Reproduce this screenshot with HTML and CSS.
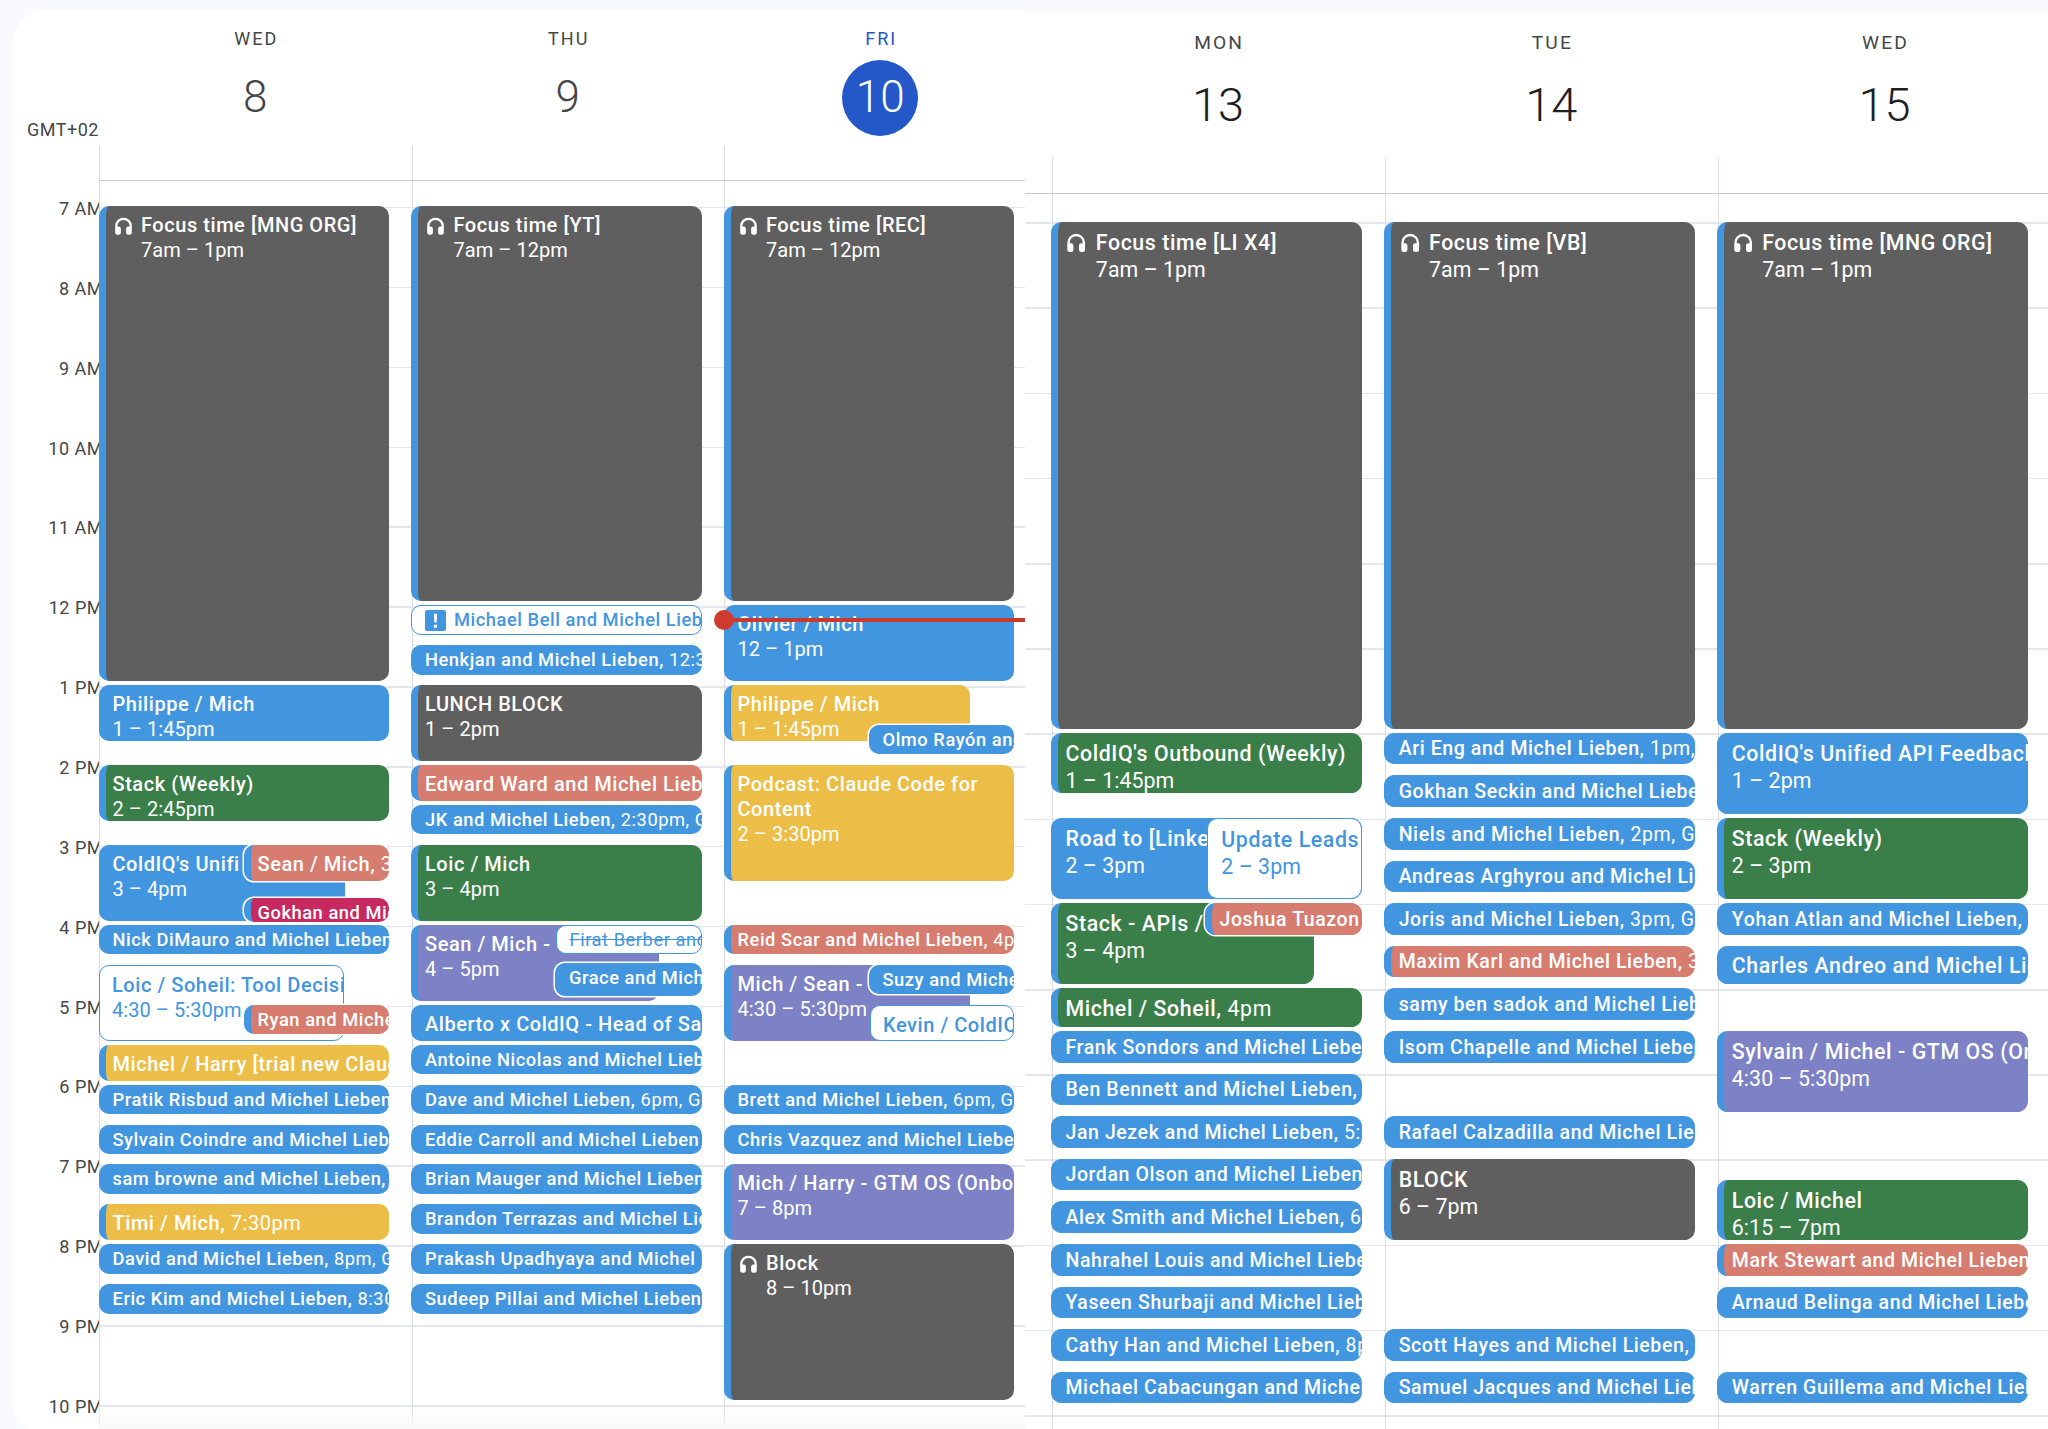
FILE: index.html
```html
<!DOCTYPE html>
<html lang="en">
<head>
  <meta charset="utf-8">
  <title>Calendar – two weeks</title>
  <link rel="stylesheet" href="styles.css">
</head>
<body>
  <svg class="sprite" width="0" height="0">
    <symbol id="headphones" viewBox="0 0 24 24">
      <path d="M12 2.500a9.500 9.500 0 0 0-9.500 9.500v7.500a2.500 2.500 0 0 0 2.500 2.500h1.500A2.500 2.500 0 0 0 9 19.500V15a2.500 2.500 0 0 0-2.500-2.500h-1.500V12a7 7 0 0 1 14 0v.5h-1.500A2.500 2.500 0 0 0 15 15v4.500a2.500 2.500 0 0 0 2.500 2.500H19a2.500 2.500 0 0 0 2.500-2.500V12A9.500 9.500 0 0 0 12 2.500z"/>
    </symbol>
  </svg>

  <main class="screens">

    <!-- Week 1: Wed 8 to Fri 10 -->
    <section class="cal cal-a">
      <div class="head">
        <div class="tz">GMT+02</div>
        <div class="day-head"><div class="dow">WED</div><div class="num">8</div><div class="tail"></div></div>
        <div class="day-head"><div class="dow">THU</div><div class="num">9</div><div class="tail"></div></div>
        <div class="day-head today"><div class="dow">FRI</div><div class="num">10</div><div class="tail"></div></div>
      </div>

      <div class="grid">
        <div class="gutter">
          <div class="hr">7 AM</div>
          <div class="hr">8 AM</div>
          <div class="hr">9 AM</div>
          <div class="hr">10 AM</div>
          <div class="hr">11 AM</div>
          <div class="hr">12 PM</div>
          <div class="hr">1 PM</div>
          <div class="hr">2 PM</div>
          <div class="hr">3 PM</div>
          <div class="hr">4 PM</div>
          <div class="hr">5 PM</div>
          <div class="hr">6 PM</div>
          <div class="hr">7 PM</div>
          <div class="hr">8 PM</div>
          <div class="hr">9 PM</div>
          <div class="hr">10 PM</div>
        </div>

        <!-- Wed 8 -->
        <div class="day">
          <div class="ev gray focus" style="--t:7;--d:6"><svg class="ic"><use href="#headphones"/></svg><div><div class="ttl">Focus time [MNG ORG]</div><div class="tm">7am – 1pm</div></div></div>
          <div class="ev blue" style="--t:13;--d:.75"><div class="ttl">Philippe / Mich</div><div class="tm">1 – 1:45pm</div></div>
          <div class="ev green" style="--t:14;--d:.75"><div class="ttl">Stack (Weekly)</div><div class="tm">2 – 2:45pm</div></div>
          <div class="ev blue" style="--t:15;--d:1;--r:44px"><div class="ttl">ColdIQ's Unifi</div><div class="tm">3 – 4pm</div></div>
          <div class="ev salmon one ring" style="--t:15;--d:.5;--x:145px"><b>Sean / Mich,</b> 3pm</div>
          <div class="ev crimson short ring" style="--t:15.66;--d:.35;--x:145px"><b>Gokhan and Michel</b></div>
          <div class="ev blue short" style="--t:16;--d:.417"><b>Nick DiMauro and Michel Lieben</b></div>
          <div class="ev line" style="--t:16.5;--d:1;--r:45px"><div class="ttl">Loic / Soheil: Tool Decisi</div><div class="tm">4:30 – 5:30pm</div></div>
          <div class="ev salmon short ring" style="--t:17;--d:.417;--x:145px"><b>Ryan and Michel</b></div>
          <div class="ev yellow one" style="--t:17.5;--d:.5"><b>Michel / Harry [trial new Claude</b></div>
          <div class="ev blue short" style="--t:18;--d:.417"><b>Pratik Risbud and Michel Lieben</b></div>
          <div class="ev blue short" style="--t:18.5;--d:.417"><b>Sylvain Coindre and Michel Lieben</b></div>
          <div class="ev blue short" style="--t:19;--d:.417"><b>sam browne and Michel Lieben,</b></div>
          <div class="ev yellow one" style="--t:19.5;--d:.5"><b>Timi / Mich,</b> 7:30pm</div>
          <div class="ev blue short" style="--t:20;--d:.417"><b>David and Michel Lieben,</b> 8pm, Google</div>
          <div class="ev blue short" style="--t:20.5;--d:.417"><b>Eric Kim and Michel Lieben,</b> 8:30pm</div>
        </div>

        <!-- Thu 9 -->
        <div class="day">
          <div class="ev gray focus" style="--t:7;--d:5"><svg class="ic"><use href="#headphones"/></svg><div><div class="ttl">Focus time [YT]</div><div class="tm">7am – 12pm</div></div></div>
          <div class="ev line short needs-rsvp" style="--t:12;--d:.417"><svg class="alert" viewBox="0 0 20 20"><rect width="20" height="20" rx="2"/><path d="M8.500 3.500h3l-.4 8.500H8.900zM8.500 14h3v3h-3z"/></svg><b>Michael Bell and Michel Lieben</b></div>
          <div class="ev blue short" style="--t:12.5;--d:.417"><b>Henkjan and Michel Lieben,</b> 12:30pm</div>
          <div class="ev gray" style="--t:13;--d:1"><div class="ttl">LUNCH BLOCK</div><div class="tm">1 – 2pm</div></div>
          <div class="ev salmon one" style="--t:14;--d:.5"><b>Edward Ward and Michel Lieben</b></div>
          <div class="ev blue short" style="--t:14.5;--d:.417"><b>JK and Michel Lieben,</b> 2:30pm, Google</div>
          <div class="ev green" style="--t:15;--d:1"><div class="ttl">Loic / Mich</div><div class="tm">3 – 4pm</div></div>
          <div class="ev purple" style="--t:16;--d:1;--r:43px"><div class="ttl">Sean / Mich -</div><div class="tm">4 – 5pm</div></div>
          <div class="ev line short struck" style="--t:16;--d:.417;--x:145px"><b>Firat Berber and Michel</b></div>
          <div class="ev blue short ring" style="--t:16.475;--d:.46;--x:144px"><b>Grace and Michel</b></div>
          <div class="ev blue one" style="--t:17;--d:.5"><b>Alberto x ColdIQ - Head of Sales</b></div>
          <div class="ev blue short" style="--t:17.5;--d:.417"><b>Antoine Nicolas and Michel Lieben</b></div>
          <div class="ev blue short" style="--t:18;--d:.417"><b>Dave and Michel Lieben,</b> 6pm, Google</div>
          <div class="ev blue short" style="--t:18.5;--d:.417"><b>Eddie Carroll and Michel Lieben</b></div>
          <div class="ev blue short" style="--t:19;--d:.417"><b>Brian Mauger and Michel Lieben</b></div>
          <div class="ev blue short" style="--t:19.5;--d:.417"><b>Brandon Terrazas and Michel Lieben</b></div>
          <div class="ev blue short" style="--t:20;--d:.417"><b>Prakash Upadhyaya and Michel Lieben</b></div>
          <div class="ev blue short" style="--t:20.5;--d:.417"><b>Sudeep Pillai and Michel Lieben</b></div>
        </div>

        <!-- Fri 10 -->
        <div class="day">
          <div class="ev gray focus" style="--t:7;--d:5"><svg class="ic"><use href="#headphones"/></svg><div><div class="ttl">Focus time [REC]</div><div class="tm">7am – 12pm</div></div></div>
          <div class="ev blue" style="--t:12;--d:1"><div class="ttl">Olivier / Mich</div><div class="tm">12 – 1pm</div></div>
          <div class="ev yellow" style="--t:13;--d:.75;--r:44px"><div class="ttl">Philippe / Mich</div><div class="tm">1 – 1:45pm</div></div>
          <div class="ev blue short ring" style="--t:13.5;--d:.417;--x:145px"><b>Olmo Rayón and Michel</b></div>
          <div class="ev yellow wrap" style="--t:14;--d:1.5"><div class="ttl">Podcast: Claude Code for Content</div><div class="tm">2 – 3:30pm</div></div>
          <div class="ev salmon short" style="--t:16;--d:.417"><b>Reid Scar and Michel Lieben,</b> 4pm</div>
          <div class="ev purple" style="--t:16.5;--d:1;--r:44px"><div class="ttl">Mich / Sean -</div><div class="tm">4:30 – 5:30pm</div></div>
          <div class="ev blue short ring" style="--t:16.5;--d:.417;--x:145px"><b>Suzy and Michel</b></div>
          <div class="ev line one" style="--t:17;--d:.5;--x:146px"><b>Kevin / ColdIQ</b></div>
          <div class="ev blue short" style="--t:18;--d:.417"><b>Brett and Michel Lieben,</b> 6pm, Google</div>
          <div class="ev blue short" style="--t:18.5;--d:.417"><b>Chris Vazquez and Michel Lieben</b></div>
          <div class="ev purple" style="--t:19;--d:1"><div class="ttl">Mich / Harry - GTM OS (Onboarding)</div><div class="tm">7 – 8pm</div></div>
          <div class="ev gray focus" style="--t:20;--d:2"><svg class="ic"><use href="#headphones"/></svg><div><div class="ttl">Block</div><div class="tm">8 – 10pm</div></div></div>
          <div class="now" style="--t:12.17"></div>
        </div>
      </div>
    </section>

    <!-- Week 2: Mon 13 to Wed 15 -->
    <section class="cal cal-b">
      <div class="head">
        <div class="tz"></div>
        <div class="day-head"><div class="dow">MON</div><div class="num">13</div><div class="tail"></div></div>
        <div class="day-head"><div class="dow">TUE</div><div class="num">14</div><div class="tail"></div></div>
        <div class="day-head"><div class="dow">WED</div><div class="num">15</div><div class="tail"></div></div>
      </div>

      <div class="grid">
        <div class="gutter"></div>

        <!-- Mon 13 -->
        <div class="day">
          <div class="ev gray focus" style="--t:7;--d:6"><svg class="ic"><use href="#headphones"/></svg><div><div class="ttl">Focus time [LI X4]</div><div class="tm">7am – 1pm</div></div></div>
          <div class="ev green" style="--t:13;--d:.75"><div class="ttl">ColdIQ's Outbound (Weekly)</div><div class="tm">1 – 1:45pm</div></div>
          <div class="ev blue" style="--t:14;--d:1"><div class="ttl">Road to [Linke</div><div class="tm">2 – 3pm</div></div>
          <div class="ev line" style="--t:14;--d:1;--x:156px"><div class="ttl">Update Leads</div><div class="tm">2 – 3pm</div></div>
          <div class="ev green" style="--t:15;--d:1;--r:48px"><div class="ttl">Stack - APIs /</div><div class="tm">3 – 4pm</div></div>
          <div class="ev salmon short ring" style="--t:15;--d:.417;--x:154px"><b>Joshua Tuazon</b></div>
          <div class="ev green one" style="--t:16;--d:.5"><b>Michel / Soheil,</b> 4pm</div>
          <div class="ev blue short" style="--t:16.5;--d:.417"><b>Frank Sondors and Michel Lieben</b></div>
          <div class="ev blue short" style="--t:17;--d:.417"><b>Ben Bennett and Michel Lieben,</b></div>
          <div class="ev blue short" style="--t:17.5;--d:.417"><b>Jan Jezek and Michel Lieben,</b> 5:30pm</div>
          <div class="ev blue short" style="--t:18;--d:.417"><b>Jordan Olson and Michel Lieben</b></div>
          <div class="ev blue short" style="--t:18.5;--d:.417"><b>Alex Smith and Michel Lieben,</b> 6:30pm</div>
          <div class="ev blue short" style="--t:19;--d:.417"><b>Nahrahel Louis and Michel Lieben</b></div>
          <div class="ev blue short" style="--t:19.5;--d:.417"><b>Yaseen Shurbaji and Michel Lieben</b></div>
          <div class="ev blue short" style="--t:20;--d:.417"><b>Cathy Han and Michel Lieben,</b> 8pm</div>
          <div class="ev blue short" style="--t:20.5;--d:.417"><b>Michael Cabacungan and Michel</b></div>
        </div>

        <!-- Tue 14 -->
        <div class="day">
          <div class="ev gray focus" style="--t:7;--d:6"><svg class="ic"><use href="#headphones"/></svg><div><div class="ttl">Focus time [VB]</div><div class="tm">7am – 1pm</div></div></div>
          <div class="ev blue short" style="--t:13;--d:.417"><b>Ari Eng and Michel Lieben,</b> 1pm, Google</div>
          <div class="ev blue short" style="--t:13.5;--d:.417"><b>Gokhan Seckin and Michel Lieben</b></div>
          <div class="ev blue short" style="--t:14;--d:.417"><b>Niels and Michel Lieben,</b> 2pm, Google</div>
          <div class="ev blue short" style="--t:14.5;--d:.417"><b>Andreas Arghyrou and Michel Lieben</b></div>
          <div class="ev blue short" style="--t:15;--d:.417"><b>Joris and Michel Lieben,</b> 3pm, Google</div>
          <div class="ev salmon short" style="--t:15.5;--d:.417"><b>Maxim Karl and Michel Lieben,</b> 3:30pm</div>
          <div class="ev blue short" style="--t:16;--d:.417"><b>samy ben sadok and Michel Lieben</b></div>
          <div class="ev blue short" style="--t:16.5;--d:.417"><b>Isom Chapelle and Michel Lieben</b></div>
          <div class="ev blue short" style="--t:17.5;--d:.417"><b>Rafael Calzadilla and Michel Lieben</b></div>
          <div class="ev gray" style="--t:18;--d:1"><div class="ttl">BLOCK</div><div class="tm">6 – 7pm</div></div>
          <div class="ev blue short" style="--t:20;--d:.417"><b>Scott Hayes and Michel Lieben,</b></div>
          <div class="ev blue short" style="--t:20.5;--d:.417"><b>Samuel Jacques and Michel Lieben</b></div>
        </div>

        <!-- Wed 15 -->
        <div class="day">
          <div class="ev gray focus" style="--t:7;--d:6"><svg class="ic"><use href="#headphones"/></svg><div><div class="ttl">Focus time [MNG ORG]</div><div class="tm">7am – 1pm</div></div></div>
          <div class="ev blue" style="--t:13;--d:1"><div class="ttl">ColdIQ's Unified API Feedback</div><div class="tm">1 – 2pm</div></div>
          <div class="ev green" style="--t:14;--d:1"><div class="ttl">Stack (Weekly)</div><div class="tm">2 – 3pm</div></div>
          <div class="ev blue short" style="--t:15;--d:.417"><b>Yohan Atlan and Michel Lieben,</b></div>
          <div class="ev blue one" style="--t:15.5;--d:.5"><b>Charles Andreo and Michel Lieben</b></div>
          <div class="ev purple" style="--t:16.5;--d:1"><div class="ttl">Sylvain / Michel - GTM OS (Onboarding)</div><div class="tm">4:30 – 5:30pm</div></div>
          <div class="ev green" style="--t:18.25;--d:.75"><div class="ttl">Loic / Michel</div><div class="tm">6:15 – 7pm</div></div>
          <div class="ev salmon short" style="--t:19;--d:.417"><b>Mark Stewart and Michel Lieben</b></div>
          <div class="ev blue short" style="--t:19.5;--d:.417"><b>Arnaud Belinga and Michel Lieben</b></div>
          <div class="ev blue short" style="--t:20.5;--d:.417"><b>Warren Guillema and Michel Lieben</b></div>
        </div>
      </div>
    </section>

  </main>
</body>
</html>
```

FILE: styles.css
```css
/* Reset & variables */
* { box-sizing: border-box; margin: 0; padding: 0; }
:root {
  --blue: #4296e0;
  --gray: #5f5f5f;
  --green: #3a7e49;
  --salmon: #d67d70;
  --purple: #7c82c5;
  --yellow: #ecbe47;
  --crimson: #c62a60;
  --line: #e5e5ec;
  --line-v: #dcdce3;
  --ink: #444746;
}
html, body { height: 100%; }
body {
  background: #f8fafd;
  color: var(--ink);
  font-family: Roboto, "Liberation Sans", sans-serif;
  overflow: hidden;
}
.sprite { position: absolute; }

.screens {
  display: flex;
  align-items: flex-start;
  padding-left: 13px;
}

/* Each week is the same UI at a slightly different zoom */
.cal {
  --u: 1px;
  --hour: calc(79.87 * var(--u));
  --first: calc(26 * var(--u));
  --ev-w: 290.5px;
  --nudge: 1px;
  background: #fff;
  overflow: hidden;
  position: relative;
}
.cal-a {
  width: 1012px;
  height: 1425px;
  margin-top: 10px;
  border-radius: 34px 0 0 34px;
  --gutter: 86px;
  --col: 312.5px;
}
.cal-b {
  --u: 1.0667px;
  --first: calc(26.5 * var(--u));
  --nudge: 1.5px;
  width: 1023px;
  height: 1417px;
  margin-top: 12px;
  --gutter: 26.5px;
  --col: 333.2px;
  --ev-w: 310.5px;
}
.cal-a::after {
  content: "";
  position: absolute;
  left: 86px; right: 0; bottom: 6px;
  height: 22px;
  background: linear-gradient(rgba(248,248,248,0), #f8f8f8);
}

/* Header */
.head, .grid {
  display: grid;
  grid-template-columns: var(--gutter) var(--col) var(--col) var(--col);
}
.head { height: calc(171 * var(--u)); }
.tz {
  font-size: 18px;
  line-height: 22px;
  letter-spacing: .5px;
  white-space: nowrap;
  overflow: hidden;
  padding: 109px 0 0 14px;
}
.day-head {
  display: flex;
  flex-direction: column;
  align-items: center;
  text-align: center;
  border-bottom: calc(1.5 * var(--u)) solid #c9c9cc;
}
.cal-b .head .tz { border-bottom: calc(1.5 * var(--u)) solid #c9c9cc; }
.dow {
  margin-top: calc(19 * var(--u));
  height: calc(20 * var(--u));
  line-height: calc(20 * var(--u));
  font-size: calc(18 * var(--u));
  letter-spacing: calc(2 * var(--u));
  padding-left: calc(2 * var(--u));
}
.num {
  margin-top: calc(11 * var(--u));
  width: calc(76 * var(--u));
  height: calc(76 * var(--u));
  line-height: calc(75 * var(--u));
  font-size: calc(44 * var(--u));
  font-weight: 300;
  border-radius: 50%;
}
.cal-b .num { color: #1f1f1f; }
.today .dow { color: #2458c8; }
.today .num { background: #2458c8; color: #fff; }
.tail {
  align-self: stretch;
  margin-top: auto;
  height: calc(34 * var(--u));
  border-left: 1.5px solid var(--line-v);
}

/* Time grid */
.grid { height: 100%; }
.gutter {
  overflow: hidden;
  padding-top: 15px;
}
.hr {
  height: var(--hour);
  line-height: 26px;
  font-size: 18px;
  letter-spacing: .5px;
  text-align: right;
  margin-right: -4px;
}
.day, .cal-b .gutter {
  background: repeating-linear-gradient(
    var(--line) var(--first),
    var(--line) calc(var(--first) + 1.5px),
    transparent calc(var(--first) + 1.5px),
    transparent calc(var(--first) + var(--hour))
  );
}
.day {
  position: relative;
  height: calc(1429px - 180px);
  border-left: 1.5px solid var(--line-v);
}

/* Events: --t start hour, --d length in hours, --x / --r lane insets */
.ev {
  position: absolute;
  top: calc((var(--t) - 7) * var(--hour) + var(--first) - 1px);
  left: calc(var(--x, 0px) - 1.5px);
  width: calc(var(--ev-w) - var(--x, 0px) - var(--r, 0px));
  height: calc(var(--d) * var(--hour) - 4px);
  padding: calc(6 * var(--u) + var(--nudge)) 0 0 calc(7 * var(--u));
  border-left: calc(7 * var(--u)) solid var(--blue);
  border-radius: calc(10 * var(--u));
  color: #fff;
  font-size: calc(20 * var(--u));
  line-height: calc(25 * var(--u));
  letter-spacing: calc(.55 * var(--u));
  white-space: nowrap;
  overflow: hidden;
}
.ev b, .ttl { font-weight: 500; }
.tm { letter-spacing: calc(.05 * var(--u)); }
.cal-b .tm { margin-top: .5px; }
.wrap { white-space: normal; }

.blue { background: var(--blue); }
.gray { background: var(--gray); }
.green { background: var(--green); }
.salmon { background: var(--salmon); }
.purple { background: var(--purple); }
.yellow { background: var(--yellow); }
.crimson { background: var(--crimson); }

/* White box, blue text: not yet accepted */
.line {
  background: #fff;
  color: var(--blue);
  border: 1.5px solid var(--blue);
  padding-left: calc(12.5 * var(--u));
}
.struck b { text-decoration: line-through; font-weight: 400; }

/* Overlapping events get a white edge */
.ring { box-shadow: 0 0 0 1.5px #fff; }

/* Single line events */
.short {
  padding-top: var(--nudge);
  font-size: calc(18.3 * var(--u));
  line-height: calc(28 * var(--u));
}
.one {
  padding-top: var(--nudge);
  line-height: calc(36 * var(--u));
}
.line.short { line-height: calc(26 * var(--u)); }
.needs-rsvp {
  display: flex;
  align-items: center;
  gap: 8px;
  padding-left: 13px;
}
.alert {
  flex: none;
  width: 21px;
  height: 21px;
  fill: var(--blue);
}
.alert path { fill: #fff; }

.focus {
  display: flex;
  gap: calc(7.5 * var(--u));
  padding-left: calc(7 * var(--u));
}
.ic {
  flex: none;
  width: calc(21 * var(--u));
  height: calc(22 * var(--u));
  margin-top: calc(1.5 * var(--u));
  fill: #fff;
}

/* Current time */
.now {
  position: absolute;
  top: calc((var(--t) - 7) * var(--hour) + var(--first) - 1.5px);
  left: 0;
  right: 0;
  height: 3.5px;
  background: #c8392e;
}
.now::before {
  content: "";
  position: absolute;
  left: -11px;
  top: -8.5px;
  width: 20px;
  height: 20px;
  border-radius: 50%;
  background: #d0392e;
}
```
